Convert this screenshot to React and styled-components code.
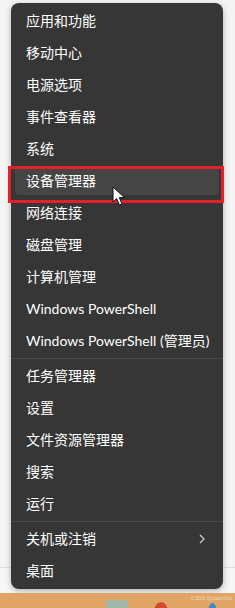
import React from "react";
import styled, { createGlobalStyle } from "styled-components";

const Global = createGlobalStyle`
  html, body { margin: 0; padding: 0; }
  body {
    background: #f3f3f3;
    font-family: Lato, "Noto Sans CJK SC", sans-serif;
    overflow: hidden;
  }
`;

const Page = styled.div`
  width: 235px;
  height: 608px;
  display: flex;
  flex-direction: column;
  background: #f4f4f4;
`;

const Desk = styled.div`
  flex: 1;
  padding: 3px 12px 0 11px;
  background: linear-gradient(#f4f4f4 0 567px, #dcdcdc 567px 568px, #f6f6f6 568px);
`;

const Menu = styled.div`
  width: 212px;
  height: 586px;
  box-sizing: border-box;
  padding: 2px 0;
  background: #363636;
  border-radius: 8px;
  box-shadow: 0 2px 6px rgba(0, 0, 0, 0.28);
  display: flex;
  flex-direction: column;
`;

const Row = styled.div`
  position: relative;
  height: 32px;
  padding: 2px 4px;
  box-sizing: border-box;
  display: flex;
`;

const Item = styled.div`
  flex: 1;
  display: flex;
  align-items: center;
  justify-content: space-between;
  padding: 0 11px;
  border-radius: 4px;
  background: ${(p) => (p.$hover ? "#454545" : "transparent")};
  color: #ffffff;
  font-size: 14px;
  line-height: 1;
  white-space: nowrap;
`;

const Sep = styled.div`
  height: 1px;
  margin: 1px 0;
  background: #4a4a4a;
`;

const RedBox = styled.div`
  position: absolute;
  top: 1px;
  left: -3px;
  right: -1px;
  height: 37px;
  box-sizing: border-box;
  border: 3px solid #e3212b;
  pointer-events: none;
`;

const Cursor = styled.svg`
  position: absolute;
  left: 101px;
  top: 21px;
`;

const Chevron = styled.svg`
  margin-right: 2px;
`;

const Taskbar = styled.div`
  height: 15px;
  background: #e0a564;
  position: relative;
  overflow: hidden;
`;

const TaskIcon = styled.div`
  position: absolute;
  top: ${(p) => p.$top}px;
  left: ${(p) => p.$left}px;
  width: ${(p) => p.$w}px;
  height: 20px;
  background: ${(p) => p.$c};
  border-radius: ${(p) => p.$r};
`;

const Mark = styled.span`
  position: absolute;
  right: 3px;
  top: 2px;
  font-size: 5px;
  color: rgba(255, 255, 255, 0.55);
  font-family: "Liberation Sans", sans-serif;
`;

const groups = [
  [
    "应用和功能",
    "移动中心",
    "电源选项",
    "事件查看器",
    "系统",
    "设备管理器",
    "网络连接",
    "磁盘管理",
    "计算机管理",
    "Windows PowerShell",
    "Windows PowerShell (管理员)",
  ],
  ["任务管理器", "设置", "文件资源管理器", "搜索", "运行"],
  ["关机或注销", "桌面"],
];

export default function App() {
  return (
    <Page>
      <Global />
      <Desk>
        <Menu>
          {groups.map((g, gi) => (
            <React.Fragment key={gi}>
              {gi > 0 && <Sep />}
              {g.map((label) => {
                const hover = label === "设备管理器";
                return (
                  <Row key={label}>
                    <Item $hover={hover}>
                      <span>{label}</span>
                      {label === "关机或注销" && (
                        <Chevron width="8" height="10" viewBox="0 0 8 10">
                          <path d="M2 1 L6 5 L2 9" fill="none" stroke="#d0d0d0" strokeWidth="1.2" />
                        </Chevron>
                      )}
                    </Item>
                    {hover && (
                      <>
                        <RedBox />
                        <Cursor width="16" height="20" viewBox="0 0 16 20">
                          <path
                            d="M1 1 L1 16 L4.6 12.6 L7.4 19 L10 17.9 L7.3 11.6 L12.5 11.6 Z"
                            fill="#ffffff"
                            stroke="#111"
                            strokeWidth="1"
                            strokeLinejoin="round"
                          />
                        </Cursor>
                      </>
                    )}
                  </Row>
                );
              })}
            </React.Fragment>
          ))}
        </Menu>
      </Desk>
      <Taskbar>
        <TaskIcon $top={7} $left={106} $w={22} $c="#9fb7a8" $r="2px" />
        <TaskIcon $top={9} $left={154} $w={14} $c="#d24a2e" $r="50%" />
        <TaskIcon $top={10} $left={208} $w={9} $c="#3f86c8" $r="50%" />
        <Mark>CSDN @piaoziAlo</Mark>
      </Taskbar>
    </Page>
  );
}
